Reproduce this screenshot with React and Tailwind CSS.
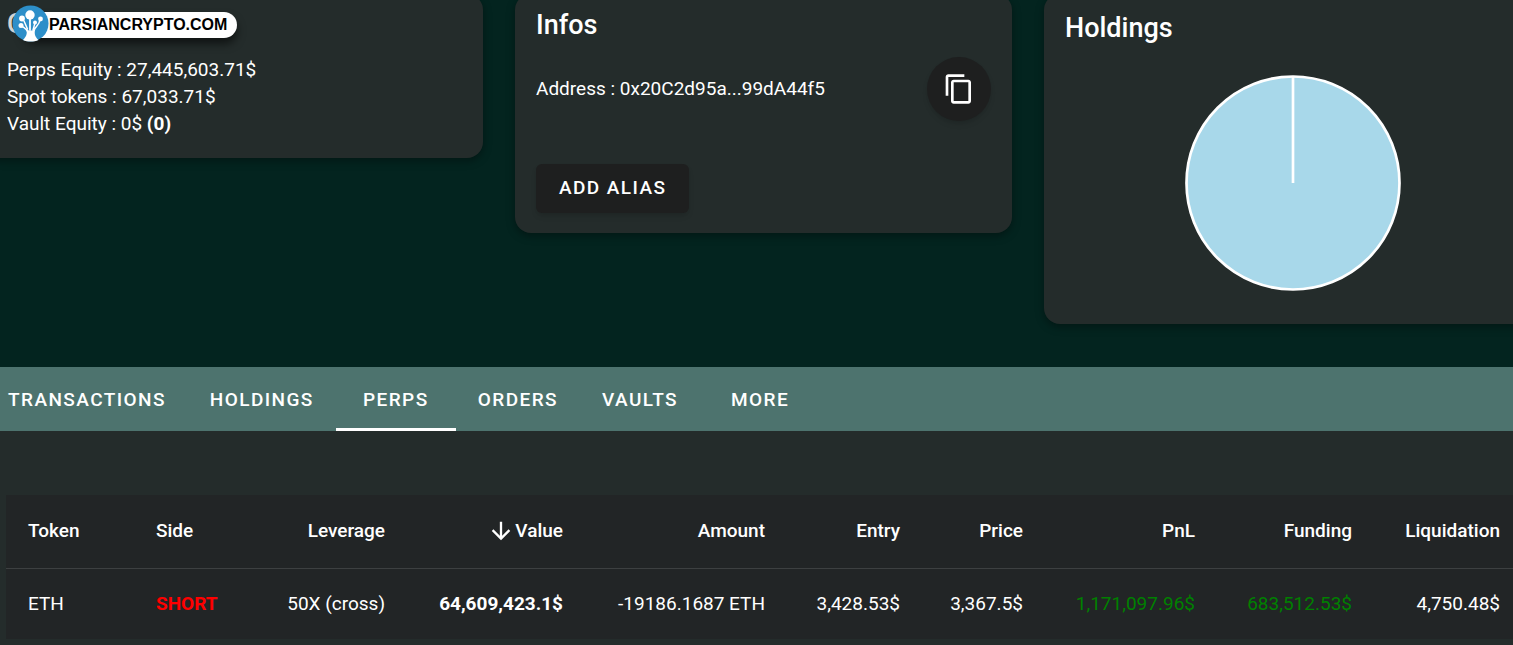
import { MdContentCopy } from "react-icons/md";

const tabs = ["Transactions", "Holdings", "Perps", "Orders", "Vaults", "More"];

const columns = [
    { label: "Token", width: "w-[128px]" },
    { label: "Side", width: "w-[130px]" },
    { label: "Leverage", width: "w-[143px]", right: true },
    { label: "Value", width: "w-[178px]", right: true, sorted: true },
    { label: "Amount", width: "w-[202px]", right: true },
    { label: "Entry", width: "w-[135px]", right: true },
    { label: "Price", width: "w-[123px]", right: true },
    { label: "PnL", width: "w-[172px]", right: true },
    { label: "Funding", width: "w-[157px]", right: true },
    { label: "Liquidation", width: "w-[148px]", right: true },
];

function ArrowDown() {
    return (
        <svg className="size-7" viewBox="0 0 24 24" fill="currentColor" aria-hidden="true">
            <path d="M11 4h2v12l5.500-5.500 1.420 1.420L12 19.840 4.080 11.920 5.500 10.500 11 16V4z" />
        </svg>
    );
}

function Logo() {
    return (
        <a href="#" className="absolute left-9 top-[18px] flex h-[26px] w-[215px] items-center rounded-full bg-white pl-[27px] shadow-[0_6px_8px_rgba(0,0,0,0.55)]">
            <svg className="absolute -left-[10px] -top-[8px] size-[38px]" viewBox="0 0 38 38" aria-hidden="true">
                <circle cx="18.500" cy="19.500" r="18" fill="#2d8fc9" />
                <g fill="none" stroke="#fff" strokeLinecap="round">
                    <path d="M18 14v12" strokeWidth="1.800" />
                    <path d="M9.500 21.500c2 2.500 4.500 2.500 6 6M28 15.500c-.500 6-5 7-7 12M12 17l3.500 8M23 19l-2 7" strokeWidth="1.500" />
                </g>
                <path d="M14 25c1.500 3.500 1 7-3 11 4.500 2 11 2 15.500 0-4-3.500-4.500-7.500-3-11-1.500 1-2.500 1.500-4.500 1.500s-3.800-.500-5-1.500z" fill="#fff" />
                <g fill="#fff">
                    <circle cx="18" cy="11" r="4.700" />
                    <circle cx="10" cy="14.500" r="2.900" />
                    <circle cx="9" cy="21.500" r="2.500" />
                    <circle cx="23" cy="18.500" r="2" />
                    <circle cx="28.500" cy="15" r="2.400" />
                </g>
            </svg>
            <span className="font-['Liberation_Sans',sans-serif] text-base font-bold text-black">PARSIANCRYPTO.COM</span>
        </a>
    );
}

function Card({ children, className = "" }) {
    return (
        <section className={`relative rounded-2xl bg-[#242c2b] px-[21px] shadow-[0_3px_8px_rgba(0,0,0,0.35)] ${className}`}>
            {children}
        </section>
    );
}

export default function App() {
    return (
        <div className="overflow-x-clip bg-[#03241f] font-[Roboto,sans-serif] text-[19px] text-white">
            <main className="-mt-1.5">
                <div className="-ml-[14px] -mr-7 grid grid-cols-3 items-start gap-8">
                    <Card className="pb-[21px] pt-3">
                        <h2 className="text-[27px] leading-9 font-medium text-[#d5d3d0]">O</h2>
                        <Logo />
                        <div className="mt-[14px] leading-[27px]">
                            <p>Perps Equity : 27,445,603.71$</p>
                            <p>Spot tokens : 67,033.71$</p>
                            <p>Vault Equity : 0$ <b>(0)</b></p>
                        </div>
                    </Card>

                    <Card className="pb-5 pt-[13px]">
                        <h2 className="text-[27px] leading-9 font-medium">Infos</h2>
                        <div className="mt-[14px] flex items-center justify-between">
                            <p>Address : 0x20C2d95a...99dA44f5</p>
                            <button type="button" aria-label="Copy address" className="flex size-16 items-center justify-center rounded-full bg-[#1e1f1f] shadow-md">
                                <MdContentCopy className="size-8" />
                            </button>
                        </div>
                        <button type="button" className="mt-[43px] h-[49px] rounded-md bg-[#1e1f1f] px-[23px] font-medium uppercase tracking-[0.075em] shadow-md">
                            Add alias
                        </button>
                    </Card>

                    <Card className="pb-8 pt-4">
                        <h2 className="text-[27px] leading-9 font-medium">Holdings</h2>
                        <svg className="mx-auto mt-7 size-[218px]" viewBox="0 0 218 218" role="img" aria-label="Holdings chart">
                            <circle cx="109" cy="109" r="106.500" fill="#a8d8ea" stroke="#fff" strokeWidth="2.700" />
                            <path d="M109 109V2" stroke="#fff" strokeWidth="2.700" />
                        </svg>
                    </Card>
                </div>

                <nav className="mt-[43px] flex h-16 bg-[#4d736e]">
                    <div className="-ml-[14px] flex">
                        {tabs.map((tab) => (
                            <button
                                key={tab}
                                type="button"
                                className={`min-w-[120px] border-b-3 px-[22px] pt-[5px] font-medium uppercase tracking-[0.075em] ${tab === "Perps" ? "border-white" : "border-transparent"}`}
                            >
                                {tab}
                            </button>
                        ))}
                    </div>
                </nav>

                <section className="bg-[#242c2b] pb-1.5 pl-1.5 pt-16">
                    <div className="-mr-[9px]">
                        <table className="w-full table-fixed bg-[#222526]">
                            <thead>
                                <tr className="h-[73px] border-b border-[#3d4041]">
                                    {columns.map((col) => (
                                        <th key={col.label} className={`px-[22px] font-medium ${col.width} ${col.right ? "text-right" : "text-left"}`}>
                                            <span className={`flex items-center ${col.right ? "justify-end" : ""}`}>
                                                {col.sorted && <ArrowDown />}
                                                {col.label}
                                            </span>
                                        </th>
                                    ))}
                                </tr>
                            </thead>
                            <tbody>
                                <tr className="h-[71px] text-right whitespace-nowrap">
                                    <td className="px-[22px] text-left">ETH</td>
                                    <td className="px-[22px] text-left font-bold text-[#ff0000]">SHORT</td>
                                    <td className="px-[22px]">50X (cross)</td>
                                    <td className="px-[22px] font-bold">64,609,423.1$</td>
                                    <td className="px-[22px]">-19186.1687 ETH</td>
                                    <td className="px-[22px]">3,428.53$</td>
                                    <td className="px-[22px]">3,367.5$</td>
                                    <td className="px-[22px] text-[#008000]">1,171,097.96$</td>
                                    <td className="px-[22px] text-[#008000]">683,512.53$</td>
                                    <td className="px-[22px]">4,750.48$</td>
                                </tr>
                            </tbody>
                        </table>
                    </div>
                </section>
            </main>
        </div>
    );
}
